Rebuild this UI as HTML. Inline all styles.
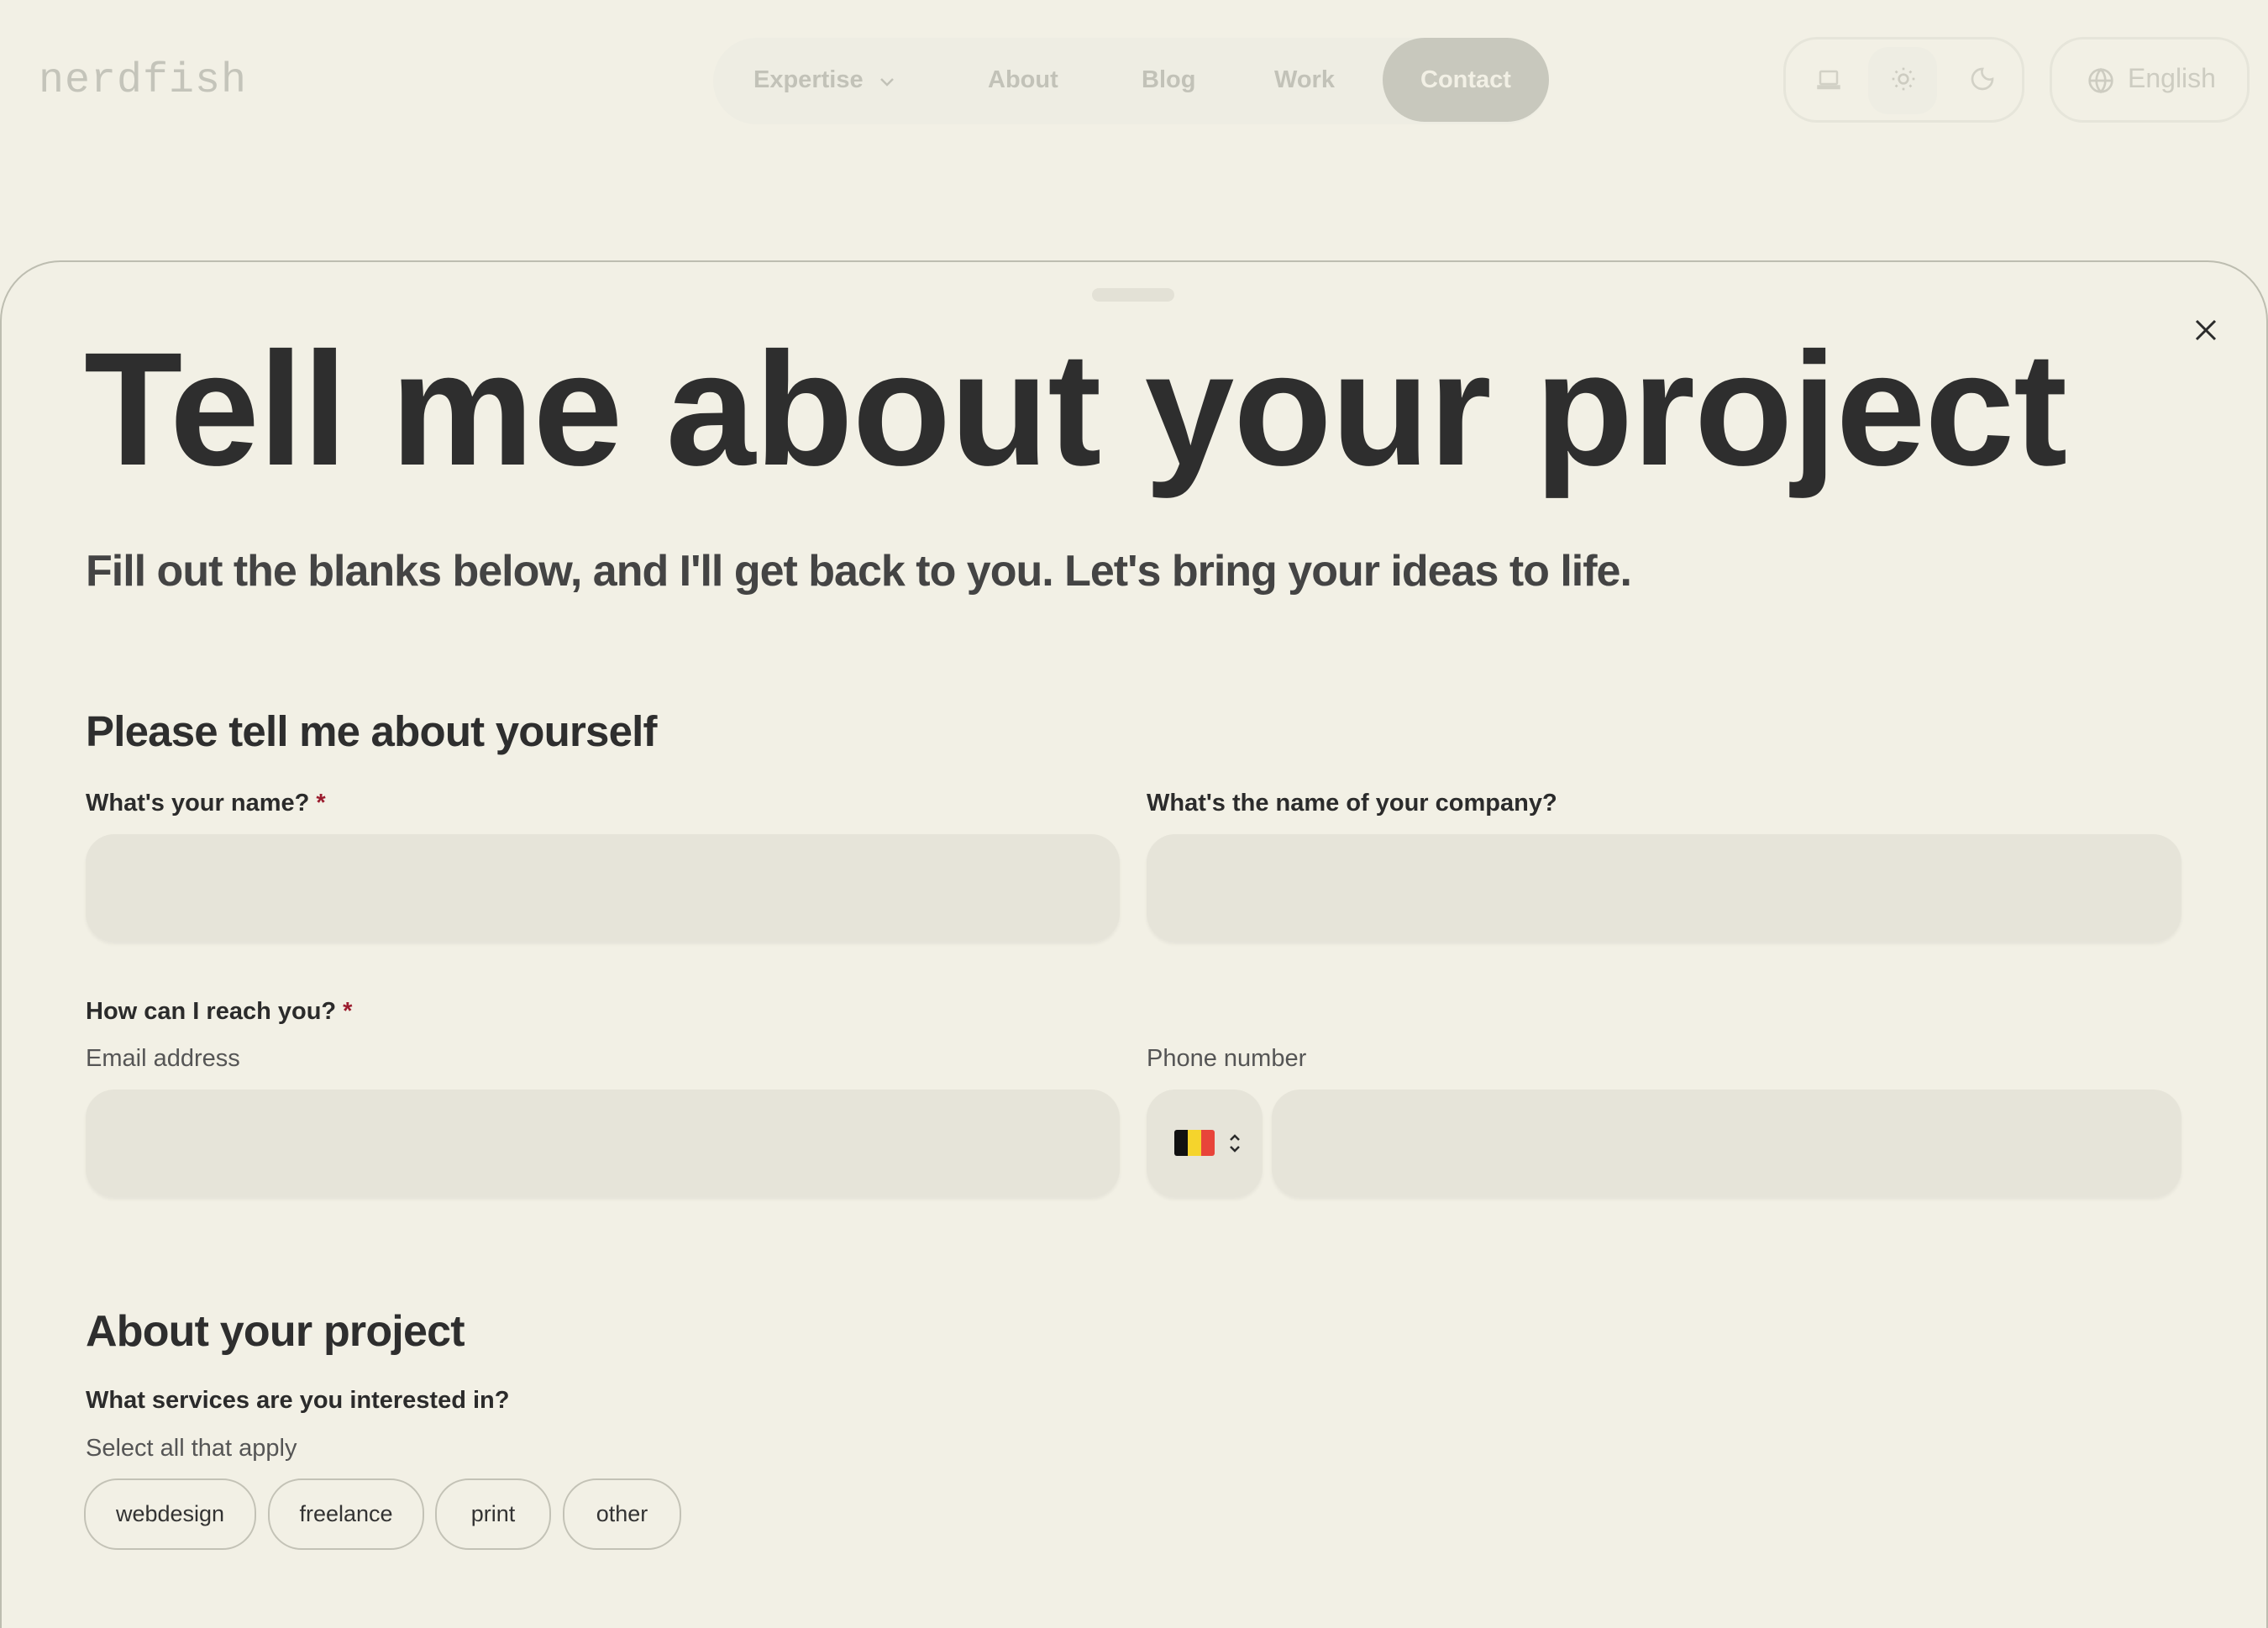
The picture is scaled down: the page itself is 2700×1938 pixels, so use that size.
<!DOCTYPE html>
<html style="overflow:hidden"><head><meta charset="utf-8"><style>
*{box-sizing:border-box;margin:0;padding:0}
html,body{width:2700px;height:1938px;overflow:hidden}
body{background:#f2f0e5;font-family:"Liberation Sans",sans-serif;color:#2b2b2b;position:relative}
.abs{position:absolute}
.logo{left:46px;top:68px;font-family:"Liberation Mono",monospace;font-size:50px;color:#c4c4ba;letter-spacing:1px}
.nav{left:849px;top:45px;width:995px;height:103px;border-radius:52px;background:#eeede3}
.nav span{position:absolute;top:0;line-height:100px;font-size:29px;font-weight:bold;color:#c2c2b8}
.contact{left:797px;width:198px;height:100px;border-radius:50px;background:#c8c8bd;color:#f2f0e5!important;text-align:center}
.box{border:3px solid #e6e5da;border-radius:40px;height:102px;top:44px}
.sheet{left:0;top:310px;width:2700px;height:1628px;border-top:2px solid #bdbdb0;border-left:2px solid #bdbdb0;border-right:2px solid #bdbdb0;border-radius:72px 72px 0 0}
.handle{left:1300px;top:343px;width:98px;height:16px;border-radius:8px;background:#e3e1d6}
h1{position:absolute;left:100px;top:372px;font-size:192px;font-weight:900;letter-spacing:-1px;color:#2e2e2e;line-height:1.2}
.sub{left:102px;top:650px;font-size:52px;color:#444;font-weight:bold;letter-spacing:-1px}
.h2{font-size:51px;font-weight:bold;color:#2e2e2e;letter-spacing:-0.8px}
.lbl{font-size:29px;font-weight:bold;color:#2b2b2b}
.lbl i{color:#9b1c2e;font-style:normal;margin-left:8px}
.hint{font-size:29px;color:#555}
.inp{background:#e6e4d9;border-radius:34px;height:128px;box-shadow:0 3px 4px rgba(0,0,0,.05)}
.chip{top:1760px;height:85px;border:2px solid #c3c2b6;border-radius:40px;font-size:27px;line-height:81px;text-align:center;color:#333}
</style></head><body>
<div class="abs logo">nerdfish</div>
<div class="abs nav">
<span style="left:48px">Expertise <svg width="20" height="14" viewBox="0 0 20 14" style="margin-left:10px"><path d="M3 4l7 7 7-7" fill="none" stroke="#c2c2b8" stroke-width="2.5"/></svg></span>
<span style="left:327px">About</span>
<span style="left:510px">Blog</span>
<span style="left:668px">Work</span>
<span class="contact">Contact</span>
</div>
<div class="abs box" style="left:2123px;width:287px">
<div class="abs" style="left:98px;top:9px;width:82px;height:80px;border-radius:24px;background:#eeede3"></div>
<svg class="abs" style="left:36px;top:33px" width="30" height="30" viewBox="0 0 24 24" fill="none" stroke="#d2d1c6" stroke-width="2"><rect x="4" y="4" width="16" height="12" rx="1"/><path d="M2 18h20v2H2z"/></svg>
<svg class="abs" style="left:124px;top:31px" width="32" height="32" viewBox="0 0 24 24" fill="none" stroke="#cdccc1" stroke-width="2"><circle cx="12" cy="12" r="4"/><path d="M12 2v2M12 20v2M2 12h2M20 12h2M5 5l1.5 1.5M17.5 17.5L19 19M5 19l1.5-1.5M17.5 6.5L19 5"/></svg>
<svg class="abs" style="left:218px;top:31px" width="32" height="32" viewBox="0 0 24 24" fill="none" stroke="#d2d1c6" stroke-width="2"><path d="M12 3a7 7 0 0 0 9 9 9 9 0 1 1-9-9z"/></svg>
</div>
<div class="abs box" style="left:2440px;width:238px">
<svg class="abs" style="left:42px;top:33px" width="32" height="32" viewBox="0 0 24 24" fill="none" stroke="#cdccc1" stroke-width="2"><circle cx="12" cy="12" r="10"/><path d="M2 12h20M12 2c3 3 4 6 4 10s-1 7-4 10c-3-3-4-6-4-10s1-7 4-10z"/></svg>
<span class="abs" style="left:90px;top:28px;font-size:32px;color:#cdccc1">English</span>
</div>
<div class="abs sheet"></div>
<div class="abs handle"></div>
<svg class="abs" style="left:2612px;top:379px" width="28" height="28" viewBox="0 0 28 28"><path d="M3 3l22 22M25 3L3 25" stroke="#2b2b2b" stroke-width="3"/></svg>
<h1>Tell me about your project</h1>
<div class="abs sub">Fill out the blanks below, and I'll get back to you. Let's bring your ideas to life.</div>
<div class="abs h2" style="left:102px;top:841px">Please tell me about yourself</div>
<div class="abs lbl" style="left:102px;top:940px">What's your name?<i>*</i></div>
<div class="abs lbl" style="left:1365px;top:940px">What's the name of your company?</div>
<div class="abs inp" style="left:102px;top:993px;width:1231px"></div>
<div class="abs inp" style="left:1365px;top:993px;width:1232px"></div>
<div class="abs lbl" style="left:102px;top:1188px">How can I reach you?<i>*</i></div>
<div class="abs hint" style="left:102px;top:1244px">Email address</div>
<div class="abs hint" style="left:1365px;top:1244px">Phone number</div>
<div class="abs inp" style="left:102px;top:1297px;width:1231px"></div>
<div class="abs inp" style="left:1365px;top:1297px;width:138px"></div>
<div class="abs" style="left:1398px;top:1345px;width:48px;height:31px;border-radius:3px;overflow:hidden;display:flex"><div style="flex:1;background:#111"></div><div style="flex:1;background:#f5d42c"></div><div style="flex:1;background:#e8443a"></div></div>
<svg class="abs" style="left:1460px;top:1347px" width="20" height="28" viewBox="0 0 20 28"><path d="M5 10l5-5 5 5M5 18l5 5 5-5" fill="none" stroke="#2b2b2b" stroke-width="2.5"/></svg>
<div class="abs inp" style="left:1514px;top:1297px;width:1083px"></div>
<div class="abs h2" style="left:102px;top:1555px;font-size:52px">About your project</div>
<div class="abs lbl" style="left:102px;top:1651px">What services are you interested in?</div>
<div class="abs hint" style="left:102px;top:1708px">Select all that apply</div>
<div class="abs chip" style="left:100px;width:205px">webdesign</div>
<div class="abs chip" style="left:319px;width:186px">freelance</div>
<div class="abs chip" style="left:518px;width:138px">print</div>
<div class="abs chip" style="left:670px;width:141px">other</div>
</body></html>
